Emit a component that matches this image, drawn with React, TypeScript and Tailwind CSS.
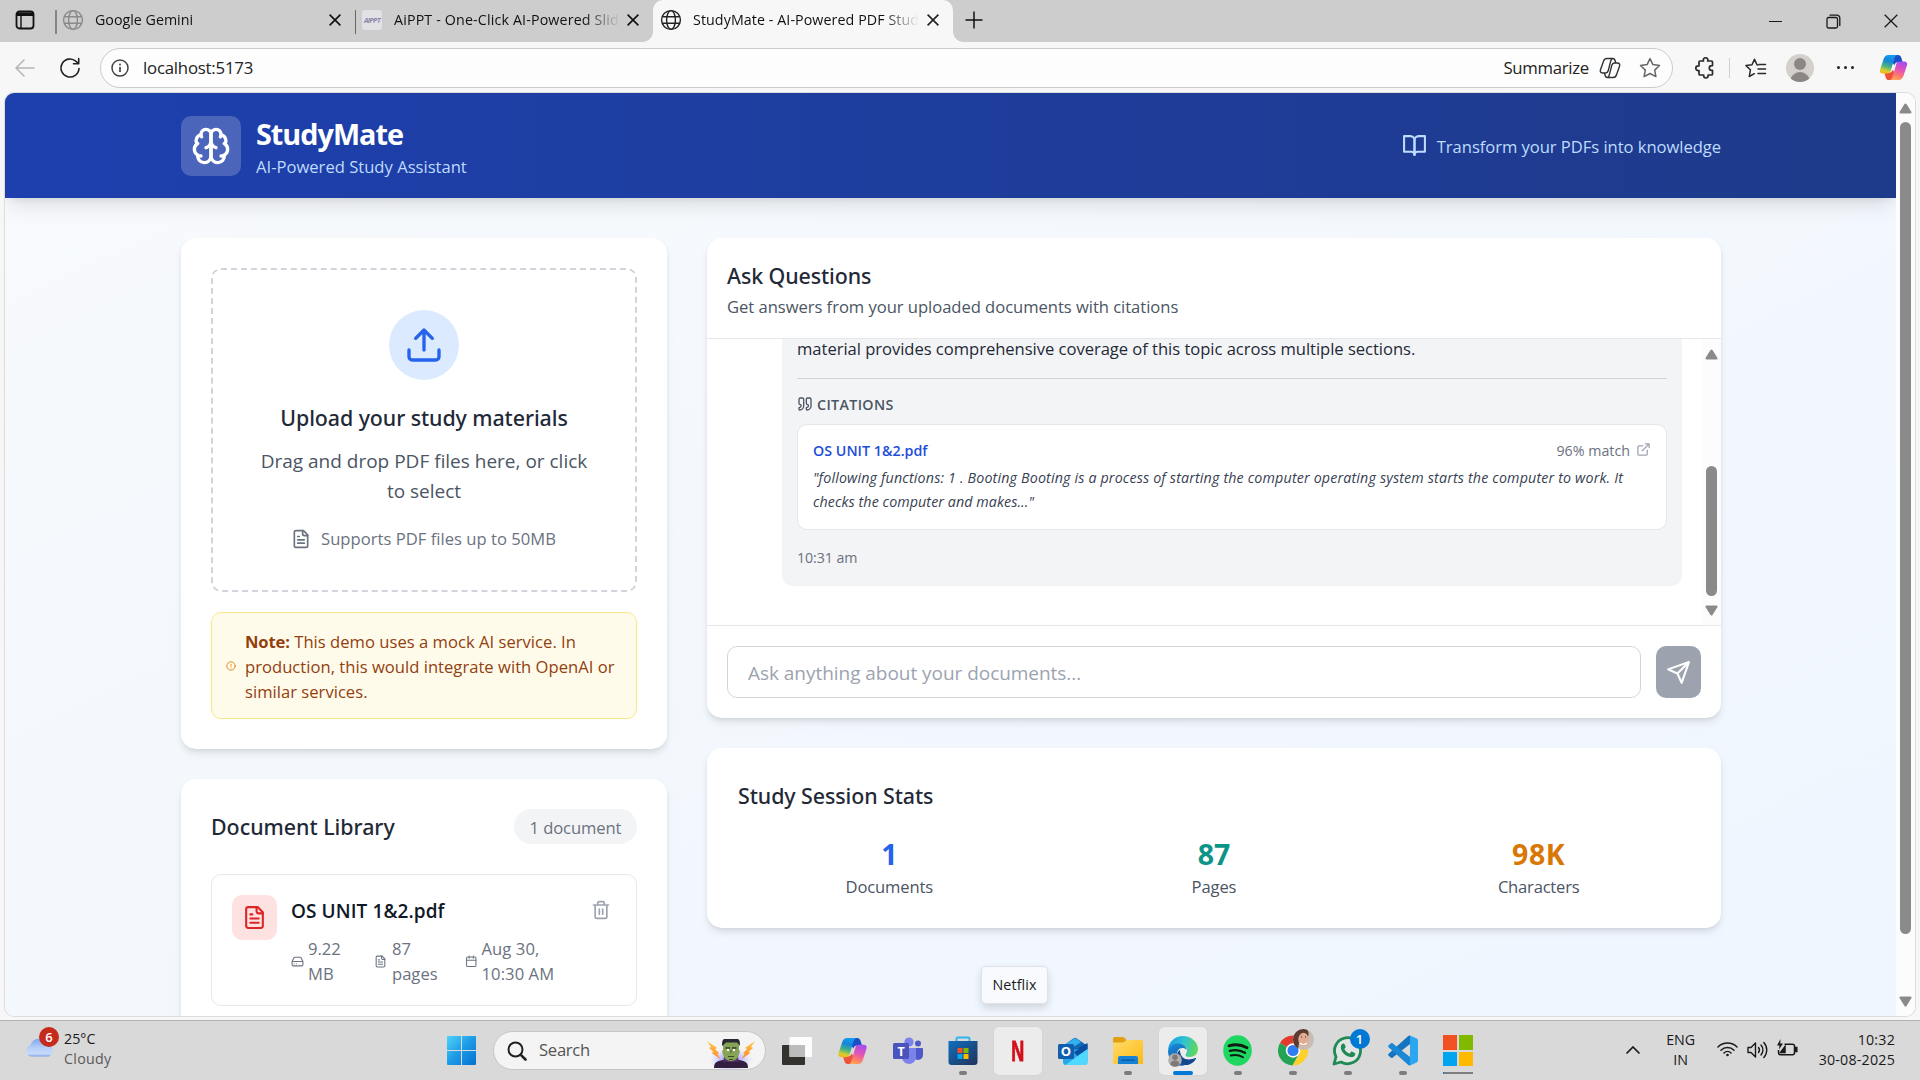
import React, { ReactNode } from "react";

type IconProps = { size: number; className?: string; sw?: number; children: ReactNode };

function Icon({ size, className = "", sw = 2, children }: IconProps) {
  return (
    <svg
      width={size}
      height={size}
      viewBox="0 0 24 24"
      fill="none"
      stroke="currentColor"
      strokeWidth={sw}
      strokeLinecap="round"
      strokeLinejoin="round"
      className={"shrink-0 " + className}
    >
      {children}
    </svg>
  );
}

const FileText = ({ size, className }: { size: number; className?: string }) => (
  <Icon size={size} className={className}>
    <path d="M15 2H6a2 2 0 0 0-2 2v16a2 2 0 0 0 2 2h12a2 2 0 0 0 2-2V7Z" />
    <path d="M14 2v4a2 2 0 0 0 2 2h4" />
    <path d="M10 9H8M16 13H8M16 17H8" />
  </Icon>
);

const GlobeIcon = ({ className }: { className: string }) => (
  <svg width="22" height="22" viewBox="0 0 22 22" fill="none" stroke="currentColor" strokeWidth="1.4" className={"shrink-0 " + className}>
    <circle cx="11" cy="11" r="9.4" />
    <ellipse cx="11" cy="11" rx="4.4" ry="9.4" />
    <path d="M2.3 7.8h17.4M2.3 14.2h17.4" />
  </svg>
);

const CloseIcon = ({ size, sw = 1.6 }: { size: number; sw?: number }) => (
  <svg width={size} height={size} viewBox="0 0 12 12" stroke="currentColor" strokeWidth={sw} className="shrink-0">
    <path d="M.6.6l10.8 10.8M11.4.6L.6 11.4" />
  </svg>
);

function CopilotLogo({ className, id }: { className: string; id: string }) {
  return (
    <svg viewBox="0 0 32 30" className={className}>
      <defs>
        <linearGradient id={id + "a"} x1="0.5" y1="0" x2="0.25" y2="1">
          <stop offset="0" stopColor="#159bf0" />
          <stop offset="0.3" stopColor="#1586d8" />
          <stop offset="0.6" stopColor="#45b284" />
          <stop offset="0.85" stopColor="#d8cf2a" />
          <stop offset="1" stopColor="#f7b51b" />
        </linearGradient>
        <linearGradient id={id + "b"} x1="0.7" y1="0" x2="0.35" y2="1">
          <stop offset="0" stopColor="#a54cf0" />
          <stop offset="0.45" stopColor="#e554b4" />
          <stop offset="0.75" stopColor="#fb7a70" />
          <stop offset="1" stopColor="#ffa653" />
        </linearGradient>
      </defs>
      <path d="M12 1h9c2 0 3 1.200 3.600 3l1.600 5.200h-5.400c-2 0-3.200 1.200-3.900 3.200L14 8z" fill="#1a4fc8" />
      <path d="M20 29h-9c-2 0-3-1.200-3.600-3L5.800 20.800h5.400c2 0 3.200-1.200 3.900-3.200L18 22z" fill="#f0513a" />
      <path d="M20.500 1H10.300C7.400 1 5.700 3 4.800 6L1 17.500c-.8 2.600.6 4.100 3 4.100h5c2.200 0 3.400-1.200 4.100-3.400l3.500-12C17.400 3.300 18.200 1 20.500 1z" fill={`url(#${id}a)`} />
      <path d="M11.500 29h10.200c2.900 0 4.600-2 5.500-5L31 12.500c.8-2.600-.6-4.100-3-4.100h-5c-2.200 0-3.400 1.200-4.100 3.400l-3.500 12C14.600 26.700 13.800 29 11.500 29z" fill={`url(#${id}b)`} />
    </svg>
  );
}

function Tab({ title, icon, track, active = false }: { title: string; icon: ReactNode; track: string; active?: boolean }) {
  return (
    <div className={"flex h-full min-w-0 flex-1 items-center pb-[2px] pr-[14px] " + (active ? "pl-[7px]" : "pl-[5px]")}>
      {icon}
      <div
        className={
          "ml-[11px] min-w-0 flex-1 overflow-hidden whitespace-nowrap text-[14.25px] leading-[20px] text-[#111] " +
          "[mask-image:linear-gradient(to_right,#000_190px,transparent_226px)] " +
          track
        }
      >
        {title}
      </div>
      <div className={active ? "ml-[9px] text-[#222]" : "ml-[9px] text-[#111]"}>
        <CloseIcon size={12} />
      </div>
    </div>
  );
}

function TabBar() {
  return (
    <div className="flex h-[42px] shrink-0 bg-[#cdcdcd]">
      <div className="flex w-[55px] items-center pb-[2px] pl-[15px]">
        <svg width="20" height="20" viewBox="0 0 20 20" fill="none" stroke="#111" strokeWidth="1.8">
          <rect x="1.5" y="1.5" width="17" height="17" rx="3" />
          <path d="M2 4.200h16" strokeWidth="3.6" />
          <path d="M6 5v13" strokeWidth="1.4" />
        </svg>
      </div>
      <div className="flex w-[300px]">
        <div className="mt-[10px] h-6 w-[2px] bg-[#858585]" />
        <Tab title="Google Gemini" track="tracking-normal" icon={<GlobeIcon className="text-[#8a8a8a]" />} />
      </div>
      <div className="flex w-[298px]">
        <div className="mt-[10px] h-6 w-px bg-[#666]" />
        <Tab
          title="AiPPT - One-Click AI-Powered Slides"
          track="tracking-[0.15px]"
          icon={
            <div className="mx-px flex h-5 w-5 shrink-0 items-center justify-center rounded-[3px] bg-[#e2e2e6] text-[7px] font-bold italic leading-none tracking-[-0.5px] text-[#8a86a8]">
              AiPPT
            </div>
          }
        />
      </div>
      <div className="relative flex w-[300px] rounded-t-[10px] bg-[#f7f7f7]">
        <div className="absolute -left-[10px] bottom-0 h-[10px] w-[10px] bg-[radial-gradient(circle_at_0_0,transparent_9.5px,#f7f7f7_10px)]" />
        <div className="absolute -right-[10px] bottom-0 h-[10px] w-[10px] bg-[radial-gradient(circle_at_100%_0,transparent_9.5px,#f7f7f7_10px)]" />
        <Tab active title="StudyMate - AI-Powered PDF Study" track="tracking-[0.08px]" icon={<GlobeIcon className="text-[#222]" />} />
      </div>
      <div className="pl-[12px] pt-[11px]">
        <svg width="18" height="18" viewBox="0 0 18 18" stroke="#111" strokeWidth="1.5">
          <path d="M9 .5v17M.5 9h17" />
        </svg>
      </div>
      <div className="ml-auto flex items-center pr-[22px] text-[#1a1a1a]">
        <div className="h-px w-[13px] bg-[#1a1a1a]" />
        <svg width="15" height="15" viewBox="0 0 15 15" fill="none" stroke="currentColor" strokeWidth="1.3" className="ml-[44px] mr-[43px]">
          <rect x="1" y="3.5" width="10.5" height="10.5" rx="1.5" />
          <path d="M3.500 1.200h7.500a2.800 2.800 0 0 1 2.800 2.800V12" />
        </svg>
        <CloseIcon size={14} sw={1.1} />
      </div>
    </div>
  );
}

function Toolbar() {
  return (
    <div className="flex h-[51px] shrink-0 items-center bg-[#f7f7f7] text-[#222]">
      <svg width="20" height="18" viewBox="0 0 20 18" fill="none" stroke="#b5b5b5" strokeWidth="1.5" strokeLinecap="round" strokeLinejoin="round" className="ml-[15px]">
        <path d="M19 9H1.200M9 1L1 9l8 8" />
      </svg>
      <svg width="22" height="22" viewBox="0 0 22 22" fill="none" stroke="#222" strokeWidth="1.6" strokeLinecap="round" strokeLinejoin="round" className="ml-6">
        <path d="M20 11.500a9 9 0 1 1-3-7.200L19.600 6.500M19.700 1.500v5.200h-5.200" />
      </svg>
      <div className="ml-[19px] flex h-10 w-[1573px] items-center rounded-full border border-[#cbcbcb] bg-[#fdfdfd]">
        <svg width="18" height="18" viewBox="0 0 18 18" fill="none" stroke="#444" strokeWidth="1.5" className="ml-[10px]">
          <circle cx="9" cy="9" r="8" />
          <path d="M9 8v5" strokeWidth="1.7" />
          <path d="M9 4.800v1.700" strokeWidth="1.7" />
        </svg>
        <span className="ml-[14px] pt-px text-[16.8px] tracking-[-0.22px] text-[#222]">localhost:5173</span>
        <span className="ml-auto pt-px text-[16.8px] tracking-[-0.3px] text-[#222]">Summarize</span>
        <svg width="22" height="22" viewBox="0 0 22 22" fill="none" stroke="#333" strokeWidth="1.4" strokeLinejoin="round" className="ml-[10px]">
          <path d="M13.500 1.500H7.800c-2 0-2.900 1.200-3.400 3L1.400 13c-.5 1.900.4 3 2 3h3.200c1.400 0 2.200-.8 2.600-2.200l2.200-8.600c.4-1.800 1-3.700 2.500-3.700 1.500 0 2 1.200 2.300 2.500l.5 2" />
          <path d="M8.500 20.500h5.700c2 0 2.900-1.200 3.400-3L20.600 9c.5-1.900-.4-3-2-3h-3.200c-1.400 0-2.200.8-2.600 2.200l-2.200 8.600c-.4 1.800-.8 3.700-2.300 3.700-1.500 0-2-1.200-2.300-2.500l-.5-2" />
        </svg>
        <Icon size={24} sw={1.5} className="ml-[17px] mr-[10px] text-[#666]">
          <path d="M12 2.600l2.900 6 6.600.9-4.800 4.600 1.200 6.500L12 17.500l-5.900 3.100 1.200-6.500-4.800-4.600 6.600-.9z" />
        </Icon>
      </div>
      <Icon size={24} sw={1.7} className="ml-5 text-[#2a2a2a]">
        <path d="M8.800 5h1.700a2.300 2.300 0 1 1 4.200 0h3.800a1 1 0 0 1 1 1v3.600h-.8a2.300 2.300 0 1 0 0 4.800h.8V18a1 1 0 0 1-1 1h-3.400v.8a2.200 2.200 0 1 1-4.400 0V19H7a1 1 0 0 1-1-1v-3.400H5.200a2.400 2.400 0 1 1 0-4.800H6V6a1 1 0 0 1 1-1z" />
      </Icon>
      <div className="ml-3 h-5 w-px bg-[#d0d0d0]" />
      <svg width="22" height="20" viewBox="0 0 22 20" fill="none" stroke="#2a2a2a" strokeWidth="1.5" strokeLinejoin="round" strokeLinecap="round" className="ml-[15px]">
        <path d="M13 7l-1-.2L9.500 1.200 7 6.800l-6 .8 4.400 4.200L4.300 18.500l5-2.800" />
        <path d="M14 6.500h6.500M13 11h7.500M13 15.500h7.500" />
      </svg>
      <div className="ml-[19px] h-7 w-7 overflow-hidden rounded-full bg-[#d4d1cd]">
        <div className="mx-auto mt-[4px] h-3 w-3 rounded-full bg-[#8a8784]" />
        <div className="mx-auto mt-[2px] h-5 w-5 rounded-full bg-[#8a8784]" />
      </div>
      <div className="ml-[23px] flex gap-1">
        <div className="h-[3px] w-[3px] rounded-full bg-[#222]" />
        <div className="h-[3px] w-[3px] rounded-full bg-[#222]" />
        <div className="h-[3px] w-[3px] rounded-full bg-[#222]" />
      </div>
      <CopilotLogo id="tb" className="ml-[25px] h-[27px] w-[29px]" />
    </div>
  );
}

function Header() {
  return (
    <header className="h-[105px] shrink-0 bg-gradient-to-r from-[#1e40af] to-[#1e3a8a] shadow-[0_12px_19px_-4px_rgba(0,0,0,0.1),0_5px_8px_-5px_rgba(0,0,0,0.1)]">
      <div className="ml-[176px] flex w-[1540px] items-start justify-between pt-[23px]">
        <div className="flex">
          <div className="flex h-[60px] w-[60px] items-center justify-center rounded-[10px] bg-white/20 text-white">
            <Icon size={40}>
              <path d="M12 5a3 3 0 1 0-5.997.125 4 4 0 0 0-2.526 5.770 4 4 0 0 0 .556 6.588A4 4 0 1 0 12 18Z" />
              <path d="M12 5a3 3 0 1 1 5.997.125 4 4 0 0 1 2.526 5.770 4 4 0 0 1-.556 6.588A4 4 0 1 1 12 18Z" />
              <path d="M15 13a4.500 4.500 0 0 1-3-4 4.500 4.500 0 0 1-3 4" />
              <path d="M17.599 6.500a3 3 0 0 0 .399-1.375M6.003 5.125A3 3 0 0 0 6.401 6.500M3.477 10.896a4 4 0 0 1 .585-.396M19.938 10.500a4 4 0 0 1 .585.396M6 18a4 4 0 0 1-1.967-.516M19.967 17.484A4 4 0 0 1 18 18" />
            </Icon>
          </div>
          <div className="ml-[15px] mt-[2px]">
            <h1 className="text-[28.8px] font-bold leading-[32px] tracking-[-1px] text-white">StudyMate</h1>
            <p className="mt-[6px] text-[16.6px] leading-[22px] text-[#bfdbfe]">AI-Powered Study Assistant</p>
          </div>
        </div>
        <div className="mt-[17px] flex items-center text-[#bfdbfe]">
          <Icon size={25}>
            <path d="M2 3h6a4 4 0 0 1 4 4v14a3 3 0 0 0-3-3H2z" />
            <path d="M22 3h-6a4 4 0 0 0-4 4v14a3 3 0 0 1 3-3h7z" />
          </Icon>
          <span className="ml-[10px] pt-[2px] text-[16.6px] leading-[22px] tracking-[-0.05px]">Transform your PDFs into knowledge</span>
        </div>
      </div>
    </header>
  );
}

const cardShadow = "shadow-[0_5px_8px_-1px_rgba(0,0,0,0.1),0_2px_5px_-2px_rgba(0,0,0,0.1)]";

function UploadCard() {
  return (
    <section className={"rounded-[15px] bg-white p-[30px] " + cardShadow}>
      <div className="flex h-[324px] flex-col items-center rounded-[10px] border-2 border-dashed border-[#d1d5db] pt-[40px]">
        <div className="flex h-[70px] w-[70px] items-center justify-center rounded-full bg-[#dbeafe] text-[#2563eb]">
          <Icon size={40}>
            <path d="M21 15v4a2 2 0 0 1-2 2H5a2 2 0 0 1-2-2v-4M17 8l-5-5-5 5M12 3v12" />
          </Icon>
        </div>
        <h3 className="mt-5 font-['Noto_Sans',sans-serif] text-[21.4px] font-medium leading-[35px] tracking-[-0.08px] text-[#1f2937]">
          Upload your study materials
        </h3>
        <p className="mt-[11px] text-center text-[19px] leading-[30px] text-[#4b5563]">
          Drag and drop PDF files here, or click
          <br />
          to select
        </p>
        <div className="mr-px mt-5 flex items-center gap-[10px] text-[#6b7280]">
          <FileText size={20} />
          <span className="text-[16.6px] leading-[25px] tracking-[0.02px]">Supports PDF files up to 50MB</span>
        </div>
      </div>
      <div className="mt-5 flex h-[107px] items-center rounded-[10px] border border-[#fde68a] bg-[#fffbeb] pl-[14px] text-[#92400e]">
        <Icon size={10} className="text-[#d97706]">
          <circle cx="12" cy="12" r="10" />
          <path d="M12 8v4M12 16h.010" />
        </Icon>
        <p className="ml-[9px] pt-[2px] text-[16.6px] leading-[25px] tracking-[0.02px]">
          <span className="font-bold tracking-[-0.12px]">Note:</span> This demo uses a mock AI service. In
          <br />
          production, this would integrate with OpenAI or
          <br />
          similar services.
        </p>
      </div>
    </section>
  );
}

function Library() {
  return (
    <section className={"mt-[30px] h-[300px] rounded-[15px] bg-white p-[30px] " + cardShadow}>
      <div className="flex items-center justify-between">
        <h3 className="font-['Noto_Sans',sans-serif] text-[21.4px] font-medium leading-[35px] tracking-[-0.02px] text-[#1f2937]">
          Document Library
        </h3>
        <span className="h-[35px] w-[123px] rounded-full bg-[#f3f4f6] pt-px text-center text-[16.6px] leading-[35px] tracking-[-0.1px] text-[#6b7280]">
          1 document
        </span>
      </div>
      <div className="mt-[30px] flex h-[132px] items-start rounded-[10px] border border-[#e5e7eb] p-5">
        <div className="flex h-[45px] w-[45px] shrink-0 items-center justify-center rounded-[10px] bg-[#fee2e2] text-[#dc2626]">
          <FileText size={25} />
        </div>
        <div className="ml-[14px] flex-1">
          <h4 className="mt-px text-[19px] font-semibold leading-[30px] tracking-[0.08px] text-[#111827]">OS UNIT 1&amp;2.pdf</h4>
          <div className="mt-[10px] flex text-[16.6px] leading-[25px] text-[#6b7280]">
            <div className="flex w-[83px] items-center gap-1">
              <Icon size={13}>
                <path d="M22 12H2M5.450 5.110 2 12v6a2 2 0 0 0 2 2h16a2 2 0 0 0 2-2v-6l-3.450-6.890A2 2 0 0 0 16.760 4H7.240a2 2 0 0 0-1.790 1.110zM6 16h.010M10 16h.010" />
              </Icon>
              <span>
                9.22
                <br />
                MB
              </span>
            </div>
            <div className="flex w-[91px] items-center gap-[5px]">
              <FileText size={13} />
              <span>
                87
                <br />
                pages
              </span>
            </div>
            <div className="flex items-center gap-1">
              <Icon size={12.5}>
                <path d="M8 2v4M16 2v4M3 10h18" />
                <rect width="18" height="18" x="3" y="4" rx="2" />
              </Icon>
              <span className="tracking-[0.08px]">
                Aug 30,
                <br />
                10:30 AM
              </span>
            </div>
          </div>
        </div>
        <Icon size={20} className="mr-[5px] mt-[5px] text-[#9ca3af]">
          <path d="M3 6h18M19 6v14c0 1-1 2-2 2H7c-1 0-2-1-2-2V6M8 6V4c0-1 1-2 2-2h4c1 0 2 1 2 2v2M10 11v6M14 11v6" />
        </Icon>
      </div>
    </section>
  );
}

const UpArrow = () => (
  <svg width="13" height="11" viewBox="0 0 13 11" fill="#8a8a8a">
    <path d="M5.500 1c.5-.8 1.500-.8 2 0l4.800 7.800c.5.900.1 1.700-.9 1.700H1.600c-1 0-1.400-.8-.9-1.700z" />
  </svg>
);
const DownArrow = () => (
  <svg width="13" height="11" viewBox="0 0 13 11" fill="#8a8a8a">
    <path d="M5.500 10c.5.800 1.500.8 2 0l4.800-7.800c.5-.9.1-1.700-.9-1.700H1.600c-1 0-1.400.8-.9 1.700z" />
  </svg>
);

function Chat() {
  return (
    <section className={"flex h-[480px] flex-col overflow-hidden rounded-[15px] bg-white " + cardShadow}>
      <div className="h-[101px] shrink-0 border-b border-[#e5e7eb] px-5 pt-5">
        <h3 className="font-['Noto_Sans',sans-serif] text-[21.4px] font-medium leading-[36px] tracking-[-0.1px] text-[#1f2937]">Ask Questions</h3>
        <p className="text-[16.6px] leading-[25px] tracking-[-0.04px] text-[#4b5563]">
          Get answers from your uploaded documents with citations
        </p>
      </div>
      <div className="flex h-[286px] shrink-0 overflow-hidden">
        <div className="ml-[75px] h-[247px] w-[900px] shrink-0 rounded-b-[10px] bg-[#f3f4f6] px-[15px]">
          <p className="-mt-[3px] text-[16.6px] leading-[25px] tracking-[-0.04px] text-[#1f2937]">
            material provides comprehensive coverage of this topic across multiple sections.
          </p>
          <div className="mt-[17px] h-px bg-[#d1d5db]" />
          <div className="mt-4 flex items-center gap-[4px] text-[#4b5563]">
            <Icon size={16} className="-mt-0.5">
              <path d="M16 3a2 2 0 0 0-2 2v6a2 2 0 0 0 2 2 1 1 0 0 1 1 1v1a2 2 0 0 1-2 2 1 1 0 0 0-1 1v2a1 1 0 0 0 1 1 6 6 0 0 0 6-6V5a2 2 0 0 0-2-2z" />
              <path d="M5 3a2 2 0 0 0-2 2v6a2 2 0 0 0 2 2 1 1 0 0 1 1 1v1a2 2 0 0 1-2 2 1 1 0 0 0-1 1v2a1 1 0 0 0 1 1 6 6 0 0 0 6-6V5a2 2 0 0 0-2-2z" />
            </Icon>
            <span className="text-[14.25px] font-semibold leading-5 tracking-[0.35px]">CITATIONS</span>
          </div>
          <div className="mt-[9px] h-[106px] rounded-[10px] border border-[#e5e7eb] bg-white px-[15px] pt-[16px] text-[14.25px]">
            <div className="flex items-center justify-between leading-5">
              <span className="font-semibold tracking-[0.02px] text-[#1d4ed8]">OS UNIT 1&amp;2.pdf</span>
              <span className="flex items-center text-[#6b7280]">
                96% match
                <Icon size={15} className="-mt-[3px] ml-[6px] text-[#9ca3af]">
                  <path d="M15 3h6v6M10 14 21 3M18 13v6a2 2 0 0 1-2 2H5a2 2 0 0 1-2-2V8a2 2 0 0 1 2-2h6" />
                </Icon>
              </span>
            </div>
            <p className="mt-[5px] whitespace-nowrap italic leading-6 tracking-[0.16px] text-[#374151]">
              "following functions: 1 . Booting Booting is a process of starting the computer operating system starts the computer to work. It
              <br />
              <span className="tracking-[0.08px]">checks the computer and makes..."</span>
            </p>
          </div>
          <div className="mt-[18px] text-[14.25px] leading-5 tracking-[-0.1px] text-[#6b7280]">10:31 am</div>
        </div>
        <div className="ml-auto flex w-[19px] flex-col items-center bg-[#fcfcfc] pt-[10px]">
          <UpArrow />
          <div className="mt-[106px] h-[130px] w-[11px] rounded-full bg-[#8a8a8a]" />
          <div className="mt-[9px]">
            <DownArrow />
          </div>
        </div>
      </div>
      <div className="flex flex-1 gap-[15px] border-t border-[#e5e7eb] px-5 pt-5">
        <div className="h-[52px] flex-1 rounded-[10px] border border-[#d1d5db] pl-5 text-[19px] leading-[53px] tracking-[-0.04px] text-[#9ca3af]">
          Ask anything about your documents...
        </div>
        <div className="flex h-[52px] w-[45px] items-center justify-center rounded-[10px] bg-[#9ca3af] text-white">
          <Icon size={25}>
            <path d="m22 2-7 20-4-9-9-4ZM22 2 11 13" />
          </Icon>
        </div>
      </div>
    </section>
  );
}

function Stats() {
  return (
    <section className={"mt-[30px] h-[180px] rounded-[15px] bg-white p-[30px] " + cardShadow}>
      <h3 className="pl-px font-['Noto_Sans',sans-serif] text-[21.4px] font-medium leading-[35px] tracking-[-0.08px] text-[#1f2937]">Study Session Stats</h3>
      <div className="mt-[21px] grid grid-cols-3 gap-5 text-center">
        <div>
          <div className="text-[28.5px] font-bold leading-[40px] text-[#2563eb]">1</div>
          <div className="text-[16.6px] leading-[25px] tracking-[-0.14px] text-[#4b5563]">Documents</div>
        </div>
        <div>
          <div className="text-[28.5px] font-bold leading-[40px] text-[#0d9488]">87</div>
          <div className="text-[16.6px] leading-[25px] tracking-[-0.14px] text-[#4b5563]">Pages</div>
        </div>
        <div>
          <div className="text-[28.5px] font-bold leading-[40px] tracking-[0.6px] text-[#d97706]">98K</div>
          <div className="text-[16.6px] leading-[25px] tracking-[-0.22px] text-[#4b5563]">Characters</div>
        </div>
      </div>
    </section>
  );
}

function Page() {
  return (
    <div className="flex h-[923px] overflow-hidden rounded-[9px] shadow-[0_0_0_1px_#dcdcdc]">
      <div className="flex w-[1891px] flex-col bg-gradient-to-br from-[#f8fafc] to-[#eff6ff]">
        <Header />
        <main className="ml-[176px] mt-10 flex w-[1540px] gap-10">
          <div className="w-[486px]">
            <UploadCard />
            <Library />
          </div>
          <div className="flex-1">
            <Chat />
            <Stats />
          </div>
        </main>
      </div>
      <div className="flex flex-1 flex-col items-center bg-[#fcfcfc] pt-[10px]">
        <UpArrow />
        <div className="mt-[8px] h-[812px] w-[11px] rounded-full bg-[#8a8a8a]" />
        <div className="mt-[62px]">
          <DownArrow />
        </div>
      </div>
    </div>
  );
}

function Slot({ children, mark = "none", tile = false }: { children: ReactNode; mark?: "none" | "dot" | "active" | "line"; tile?: boolean }) {
  return (
    <div className="flex w-[55px] justify-center">
      <div className={"relative mt-[6px] flex h-12 w-12 items-center justify-center rounded-[5px] pb-px " + (tile ? "bg-[#ececec] shadow-[0_0_1px_#bbb]" : "")}>
        {children}
        {mark === "dot" && <div className="absolute bottom-0 h-1 w-2 rounded-full bg-[#7d7d7d]" />}
        {mark === "active" && <div className="absolute bottom-0 h-1 w-5 rounded-full bg-[#0078d4]" />}
        {mark === "line" && (
          <div className="absolute bottom-[1px] flex h-[2px] w-[30px] bg-[#7d7d7d]">
            <div className="w-[1px] bg-[#0078d4]" />
          </div>
        )}
      </div>
    </div>
  );
}

const WindowsLogo = () => (
  <svg width="29" height="29" viewBox="0 0 29 29">
    <defs>
      <linearGradient id="win" x1="0" y1="0" x2="29" y2="29" gradientUnits="userSpaceOnUse">
        <stop offset="0" stopColor="#4fd3fc" />
        <stop offset="0.5" stopColor="#1d9ae6" />
        <stop offset="1" stopColor="#0471cf" />
      </linearGradient>
    </defs>
    <path fill="url(#win)" d="M1 0h13v14H0V1a1 1 0 0 1 1-1zM15 0h13a1 1 0 0 1 1 1v13H15zM0 15h14v14H1a1 1 0 0 1-1-1zM15 15h14v13a1 1 0 0 1-1 1H15z" />
  </svg>
);

const Monster = () => (
  <svg width="50" height="32" viewBox="0 0 50 32">
    <defs>
      <radialGradient id="glow">
        <stop offset="0" stopColor="#8d7bff" />
        <stop offset="0.6" stopColor="#b9b4ff" stopOpacity="0.6" />
        <stop offset="1" stopColor="#e0deff" stopOpacity="0" />
      </radialGradient>
      <linearGradient id="bolt" x1="0" y1="0" x2="0" y2="1">
        <stop offset="0" stopColor="#ffc84a" />
        <stop offset="1" stopColor="#ff8b2e" />
      </linearGradient>
    </defs>
    <ellipse cx="25" cy="23" rx="22" ry="12" fill="url(#glow)" />
    <path d="M1 4l10 7-2 1 4 4-1.500 1 3 5-9-6 2-1-4.500-4 2-1zM49 4l-10 7 2 1-4 4 1.500 1-3 5 9-6-2-1 4.500-4-2-1z" fill="url(#bolt)" />
    <path d="M8 31c0-5 2-7 9-8h16c7 1 9 3 9 8z" fill="#33203f" />
    <path d="M18 20h14l1 5H17z" fill="#4d2d66" />
    <path d="M17 5h16v8c1 0 1 3 0 4-1 5-4 7-8 7s-7-2-8-7c-1-1-1-4 0-4z" fill="#86a356" />
    <path d="M16 9c0-6 1-7 3-7h12c2 0 3 1 3 7l-1.500-2-1.500-1.500H20L18.500 7z" fill="#282832" />
    <path d="M19.500 11h4.500M26 11h4.500" stroke="#2c3a22" strokeWidth="1.6" />
    <circle cx="22" cy="13" r="1.2" fill="#fff" />
    <circle cx="28" cy="13" r="1.2" fill="#fff" />
    <path d="M22 19.500h6M23 22.500h4" stroke="#3a4a2c" strokeWidth="1" />
    <path d="M25 13v3" stroke="#5f7c42" strokeWidth="1.6" />
  </svg>
);

const StoreIcon = () => (
  <svg width="30" height="30" viewBox="0 0 30 30">
    <defs>
      <linearGradient id="store" x1="0" y1="0" x2="1" y2="1">
        <stop offset="0" stopColor="#0f6fc0" />
        <stop offset="1" stopColor="#213257" />
      </linearGradient>
    </defs>
    <path d="M8.500 6V3A1.500 1.500 0 0 1 10 1.500h10A1.500 1.500 0 0 1 21.500 3V6" fill="none" stroke="#2fb4f2" strokeWidth="2" />
    <path d="M.5 5h29V26a3 3 0 0 1-3 3h-23a3 3 0 0 1-3-3z" fill="url(#store)" />
    <path fill="#f25022" d="M9.500 12h5v5h-5z" />
    <path fill="#7fba00" d="M15.500 12h5v5h-5z" />
    <path fill="#00a4ef" d="M9.500 18h5v5h-5z" />
    <path fill="#ffb900" d="M15.500 18h5v5h-5z" />
  </svg>
);

const TeamsIcon = () => (
  <svg width="30" height="28" viewBox="0 0 30 28">
    <circle cx="25" cy="6.5" r="3" fill="#5059c9" />
    <path d="M20 11h9a1 1 0 0 1 1 1v6a5 5 0 0 1-10 0z" fill="#5059c9" />
    <circle cx="16" cy="5" r="4.6" fill="#7b83eb" />
    <path d="M9 11h13a1 1 0 0 1 1 1v8a7 7 0 0 1-14 0z" fill="#7b83eb" />
    <rect x="0" y="6" width="16" height="16" rx="1.5" fill="#4b53bc" />
    <text x="8" y="18.5" textAnchor="middle" fontSize="12.5" fontWeight="700" fill="#fff" fontFamily="Open Sans, sans-serif">T</text>
  </svg>
);

const OutlookIcon = () => (
  <svg width="30" height="28" viewBox="0 0 30 28">
    <path d="M5 9L16 1q1-.7 2 0l11 7.500V14L17 22 5 14z" fill="#1268b8" />
    <path d="M8 7l9-6 6 4-12 8z" fill="#31b0ec" />
    <path d="M15 14L29.500 6v6L18 20z" fill="#0a4ea2" />
    <path d="M5 14l24.500-3v14a3 3 0 0 1-3 3H8a3 3 0 0 1-3-3z" fill="#28a8ea" />
    <path d="M29.500 12L8 27.500q.8.500 2 .5h17a3 3 0 0 0 2.500-3z" fill="#50d9ff" />
    <path d="M16 15L29.500 7v5L19 19z" fill="#0a4ea2" />
    <rect x="0" y="7" width="16" height="15" rx="1.5" fill="#0f5fae" />
    <text x="8" y="19.2" textAnchor="middle" fontSize="13" fontWeight="700" fill="#fff" fontFamily="Open Sans, sans-serif">O</text>
  </svg>
);

const FolderIcon = () => (
  <svg width="30" height="28" viewBox="0 0 30 28">
    <defs>
      <linearGradient id="fold" x1="0" y1="0" x2="1" y2="1">
        <stop offset="0" stopColor="#ffdc6b" />
        <stop offset="1" stopColor="#fdb913" />
      </linearGradient>
    </defs>
    <path d="M0 1.500A1.500 1.500 0 0 1 1.500 0h8.200c.8 0 1.300.2 1.800.8L13.500 3H28a2 2 0 0 1 2 2v6H0z" fill="#e0a013" />
    <path d="M0 5.500h10.500L13.500 3H28.500a1.500 1.500 0 0 1 1.500 1.500V27H1.500A1.500 1.500 0 0 1 0 25.500z" fill="url(#fold)" />
    <path d="M5 27v-6a2 2 0 0 1 2-2h16a2 2 0 0 1 2 2v6z" fill="#1582d6" />
    <path d="M9 23.300h12" stroke="#0b5ca8" strokeWidth="1.5" strokeLinecap="round" />
  </svg>
);

const EdgeIcon = () => (
  <svg width="32" height="32" viewBox="0 0 32 32">
    <defs>
      <linearGradient id="edg1" x1="0" y1="0.3" x2="1" y2="0.5">
        <stop offset="0" stopColor="#1b9de2" />
        <stop offset="0.5" stopColor="#2fc1d4" />
        <stop offset="1" stopColor="#62d957" />
      </linearGradient>
      <linearGradient id="edg2" x1="0" y1="0" x2="0.4" y2="1">
        <stop offset="0" stopColor="#1b8fdc" />
        <stop offset="1" stopColor="#0f59a8" />
      </linearGradient>
    </defs>
    <path d="M1 16C1 7 8 1 16 1s15 6 15 13c0 5-4 8-8.500 8-3 0-4-1-4-2s1.500-2 1.500-4.500C20 12 16 9 11.500 9 6 9 2 12 1 16z" fill="url(#edg1)" />
    <path d="M1 16c1-5 5.500-7.500 9.500-7.500 5 0 8.500 2.500 9 6.500-1-1.500-2.500-2-4-2-3.500 0-5.500 3-5.500 6 0 6 5 9 10 9-1.300 1.800-3 2.700-5 2.700C7 30.700 1 24 1 16z" fill="url(#edg2)" />
    <path d="M13 15c-3 2-3.500 5-2.500 8.500C12 27.500 16 30 19 30c4.500 0 8.500-3.500 10-6.300.3-.7-.3-1-1-.6-2 1-4 1.400-6 1.400-5 0-9-3-9-9.500z" fill="#12488f" />
    <circle cx="8" cy="25" r="6.8" fill="#b3b0ad" />
    <circle cx="8" cy="22.3" r="2.7" fill="#7c7976" />
    <path d="M3.300 29.800c.4-3 2.300-4.200 4.700-4.200s4.300 1.200 4.700 4.200A6.800 6.800 0 0 1 8 31.800a6.800 6.800 0 0 1-4.700-2z" fill="#7c7976" />
  </svg>
);

const SpotifyIcon = () => (
  <svg width="29" height="31" viewBox="0 0 29 31" fill="none" stroke="#0f1a12" strokeLinecap="round">
    <ellipse cx="14.5" cy="15.5" rx="14.3" ry="15.2" fill="#1ed760" stroke="none" />
    <path d="M6 10.800c6-1.800 12.500-1.200 18 1.900" strokeWidth="2.8" />
    <path d="M6.800 15.900c5.200-1.400 10.600-.8 15.200 1.900" strokeWidth="2.3" />
    <path d="M7.600 20.500c4.200-1 8.600-.6 12.400 1.700" strokeWidth="1.9" />
  </svg>
);

const ChromeIcon = () => (
  <svg width="30" height="31" viewBox="0 0 30 30">
    <path d="M15 15L2 7.500A15 15 0 0 1 28 7.500z" fill="#e33b2e" />
    <path d="M15 15L2 7.500A15 15 0 0 0 14.500 30L21 18.500z" fill="#23a455" />
    <path d="M15 15l6.300 3.600L14.500 30A15 15 0 0 0 28 7.500H15z" fill="#fdd02c" />
    <circle cx="15" cy="15" r="7.2" fill="#fff" />
    <circle cx="15" cy="15" r="5.6" fill="#2f7cf0" />
  </svg>
);

const WhatsAppIcon = () => (
  <svg width="31" height="31" viewBox="0 0 31 31">
    <path d="M2 29l2-7.200A13 13 0 1 1 9 27z" fill="#ebf3ee" fillOpacity="0.5" stroke="#1f8a55" strokeWidth="2.8" strokeLinejoin="round" />
    <path d="M11 8.500c.8-.2 1.300 0 1.600.7l1 2.400c.2.600 0 1-1.300 2.500 1.200 2.200 2.800 3.700 5.200 4.700l1.500-1.800c.4-.5.800-.5 1.300-.3l2.400 1.200c.6.300.7.800.5 1.500-.5 2-2.300 2.900-4.200 2.700-5.500-.8-10-5.200-10.200-9.700 0-1.900.9-3.500 2.200-3.900z" fill="#1f8a55" />
  </svg>
);

const VSCodeIcon = () => (
  <svg width="30" height="31" viewBox="0 0 30 30">
    <path d="M22 0l6.600 3c.9.4 1.400 1.200 1.400 2.200V24.800c0 1-.5 1.800-1.400 2.200L22 30z" fill="#2aa7f0" />
    <path d="M22 0v8.500L4.500 22.300c-.5.400-1 .4-1.500 0L.6 20.200c-.6-.5-.6-1.300 0-1.900L20.300.6C20.800.1 21.400 0 22 0z" fill="#1474bf" />
    <path d="M22 30v-8.500L4.500 7.700c-.5-.4-1-.4-1.500 0L.6 9.800c-.6.5-.6 1.300 0 1.900l19.700 17.700c.5.500 1.100.6 1.700.6z" fill="#1b88d4" />
  </svg>
);

function Taskbar() {
  return (
    <div className="flex h-[60px] shrink-0 border-t border-[#b3b3b3] bg-[#d9d9d9]">
      <div className="flex w-[434px] pl-[24px]">
        <div className="relative mt-[6px] h-[34px] w-[36px]">
          <svg width="32" height="22" viewBox="0 0 32 22" className="mt-[9px]">
            <defs>
              <linearGradient id="cl" x1="0" y1="0" x2="0" y2="1">
                <stop offset="0" stopColor="#7fa8ee" />
                <stop offset="0.5" stopColor="#b5cef9" />
                <stop offset="0.85" stopColor="#c8dbfb" />
                <stop offset="1" stopColor="#7fa3e8" />
              </linearGradient>
            </defs>
            <path d="M7 20.500A6 6 0 0 1 6.500 9 9 9 0 0 1 23 7.500 7 7 0 0 1 25 20.500z" fill="url(#cl)" />
          </svg>
          <div className="absolute left-[15px] top-0 flex h-5 w-5 items-center justify-center rounded-full bg-[#c42b1c] text-[13px] font-semibold leading-none text-white">
            6
          </div>
        </div>
        <div className="ml-[4px] mt-[8px] text-[14.25px] leading-5">
          <div className="text-[#1a1a1a]">25°C</div>
          <div className="tracking-[0.3px] text-[#5a5a5a]">Cloudy</div>
        </div>
      </div>
      <div className="flex w-[55px] justify-center pt-[15px]">
        <WindowsLogo />
      </div>
      <div className="ml-[4px] mr-[4px] mt-[10px] flex h-[39px] w-[273px] items-center rounded-full border border-[#c6c6c6] bg-[#f4f4f4]">
        <svg width="20" height="20" viewBox="0 0 20 20" fill="none" stroke="#222" strokeWidth="2" strokeLinecap="round" className="ml-[13px]">
          <circle cx="8.5" cy="8.5" r="7" />
          <path d="M13.800 13.800l4.700 4.700" strokeWidth="2.6" />
        </svg>
        <span className="ml-[12px] text-[16.6px] tracking-[-0.27px] text-[#555]">Search</span>
        <div className="ml-auto mr-[9px] mt-1">
          <Monster />
        </div>
      </div>
      <Slot>
        <svg width="30" height="28" viewBox="0 0 30 28" className="-ml-px">
          <rect x="0" y="8" width="23" height="20" rx="1" fill="#33322f" />
          <rect x="7.5" y="0" width="22.5" height="20" rx="1" fill="#fff" fillOpacity="0.92" />
          <rect x="7.5" y="8" width="15.5" height="12" fill="#bcbcbc" />
        </svg>
      </Slot>
      <Slot>
        <CopilotLogo id="tk" className="h-[28px] w-[31px]" />
      </Slot>
      <Slot>
        <TeamsIcon />
      </Slot>
      <Slot mark="dot">
        <StoreIcon />
      </Slot>
      <Slot tile>
        <span className="scale-x-[0.6] font-['Liberation_Sans',sans-serif] text-[30px] font-bold leading-none text-[#d3101b] [-webkit-text-stroke:1px_#d3101b]">N</span>
      </Slot>
      <Slot>
        <OutlookIcon />
      </Slot>
      <Slot mark="dot">
        <FolderIcon />
      </Slot>
      <Slot tile mark="active">
        <EdgeIcon />
      </Slot>
      <Slot mark="dot">
        <SpotifyIcon />
      </Slot>
      <Slot mark="dot">
        <ChromeIcon />
        <svg width="21" height="21" viewBox="0 0 21 21" className="absolute right-[3px] top-[2px]">
          <defs>
            <clipPath id="av">
              <circle cx="10.5" cy="10.5" r="10.5" />
            </clipPath>
          </defs>
          <g clipPath="url(#av)">
            <rect width="21" height="21" fill="#c9bcb2" />
            <path d="M0 0h13c3 2 3 5 2 8L6 14l-1 7H0z" fill="#5b3a30" />
            <ellipse cx="10.5" cy="10.5" rx="5.2" ry="6.8" fill="#e0ab92" />
            <path d="M7 14q3.500 3 7 0" stroke="#fff" strokeWidth="1.2" fill="none" />
            <path d="M8 8h1M12 8h1" stroke="#4a3029" strokeWidth="1.2" />
          </g>
        </svg>
      </Slot>
      <Slot mark="dot">
        <WhatsAppIcon />
        <div className="absolute right-[2px] top-[2px] flex h-5 w-5 items-center justify-center rounded-full bg-[#0078d4] text-[13px] font-semibold leading-none text-white">
          1
        </div>
      </Slot>
      <Slot mark="dot">
        <VSCodeIcon />
      </Slot>
      <Slot mark="line">
        <div className="grid h-[31px] w-[30px] grid-cols-2 gap-[2px]">
          <div className="bg-[#f25022]" />
          <div className="bg-[#7fba00]" />
          <div className="bg-[#00a4ef]" />
          <div className="bg-[#ffb900]" />
        </div>
      </Slot>
      <div className="ml-auto flex text-[14.25px] leading-5 text-[#1a1a1a]">
        <svg width="14" height="8" viewBox="0 0 14 8" fill="none" stroke="#1a1a1a" strokeWidth="1.7" strokeLinecap="round" className="mt-[25px]">
          <path d="M1 7l6-6 6 6" />
        </svg>
        <div className="mt-[9px] w-[82px] text-center">
          ENG
          <br />
          IN
        </div>
        <svg width="21" height="16" viewBox="0 0 21 16" fill="none" stroke="#1a1a1a" strokeWidth="1.5" strokeLinecap="round" className="-ml-[5px] mt-[20px]">
          <path d="M1 6a13.500 13.500 0 0 1 19 0M4 9.200a9.200 9.200 0 0 1 13 0M7 12a5 5 0 0 1 7 0" />
          <circle cx="10.5" cy="14" r="1.3" fill="#1a1a1a" stroke="none" />
        </svg>
        <svg width="21" height="18" viewBox="0 0 21 18" fill="none" stroke="#1a1a1a" strokeWidth="1.4" strokeLinecap="round" strokeLinejoin="round" className="ml-[9px] mt-[20px]">
          <path d="M1 6.500h3L8.500 2v14L4 11.500H1z" />
          <path d="M11.500 6.500a4 4 0 0 1 0 5M14 4a7.500 7.500 0 0 1 0 10M16.800 1.500a11 11 0 0 1 0 15" />
        </svg>
        <svg width="22" height="18" viewBox="0 0 22 18" fill="none" stroke="#1a1a1a" strokeWidth="1.5" className="ml-[8px] mt-[18px]">
          <path d="M8.500 5.200h8a2 2 0 0 1 2 2v6.600a2 2 0 0 1-2 2h-12a2 2 0 0 1-2-2V11" />
          <path d="M19.500 8.500v4h1.300v-4z" fill="#1a1a1a" />
          <path d="M9 7.500v6H4.500z" fill="#1a1a1a" />
          <path d="M4.500 0L1 6.500h2.500L3 10.500l4-6H4.300z" fill="#1a1a1a" stroke="none" />
        </svg>
        <div className="ml-[21px] mr-[25px] mt-[9px] text-right tracking-[0.2px]">
          10:32
          <br />
          30-08-2025
        </div>
      </div>
    </div>
  );
}

export default function App() {
  return (
    <div className="relative flex h-[1080px] w-[1920px] flex-col overflow-hidden bg-[#f7f7f7] font-['Open_Sans',sans-serif]">
      <TabBar />
      <Toolbar />
      <div className="h-[927px] shrink-0 pl-[5px] pr-[5px]">
        <Page />
      </div>
      <Taskbar />
      <div className="absolute left-[981px] top-[966px] flex h-[38px] w-[67px] items-center justify-center rounded-[5px] border border-[#dfe3e8] bg-[#f8fafd] text-[14.25px] tracking-[0.1px] text-[#1a1a1a] shadow-[0_4px_8px_rgba(0,0,0,0.14)]">
        Netflix
      </div>
    </div>
  );
}
